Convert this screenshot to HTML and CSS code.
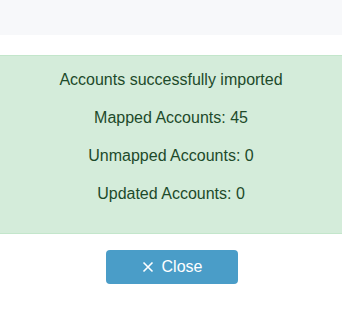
FILE: index.html
```html
<!DOCTYPE html>
<html lang="en">
<head>
  <meta charset="UTF-8" />
  <meta name="viewport" content="width=device-width, initial-scale=1.0"/>
  <title>Import Accounts</title>
  <link rel="stylesheet" href="styles.css">
</head>
<body>

  <!-- Header strip -->
  <div class="topbar"></div>

  <div class="result">
    <p>Accounts successfully imported</p>
    <p>Mapped Accounts: 45</p>
    <p>Unmapped Accounts: 0</p>
    <p>Updated Accounts: 0</p>
  </div>

  <div class="actions">
    <button class="close-btn">
      <svg class="close-icon" width="12" height="12" viewBox="0 0 12 12">
        <path d="M1.5 1.5 L10.5 10.5 M10.5 1.5 L1.5 10.5" stroke="#fff" stroke-width="1.6" fill="none"/>
      </svg>
      Close
    </button>
  </div>

</body>
</html>
```

FILE: styles.css
```css
* {
  box-sizing: border-box;
}
body {
  font-family: "Liberation Sans", Arial, sans-serif;
  margin: 0;
  background: #fff;
}

.topbar {
  height: 35px;
  background: #f7f8fa;
  margin-bottom: 20px;
}

.result {
  background: #d4ecda;
  border-top: 1px solid #c3e6cb;
  border-bottom: 1px solid #c3e6cb;
  padding: 13px 20px 12px;
  text-align: center;
  color: #1d4a2a;
  font-size: 16px;
  line-height: 22px;
}

.result p {
  margin: 0 0 16px;
}

.actions {
  display: flex;
  justify-content: center;
  padding: 16px 0 0 2px;
}

.close-btn {
  width: 132px;
  height: 34px;
  background-color: #4a9dc8;
  color: white;
  border: none;
  border-radius: 4px;
  font-family: inherit;
  font-size: 16px;
  display: flex;
  align-items: center;
  justify-content: center;
  gap: 8px;
  cursor: pointer;
}

.close-btn:hover {
  background-color: #3d8ab3;
}

.close-icon {
  display: block;
}
```
